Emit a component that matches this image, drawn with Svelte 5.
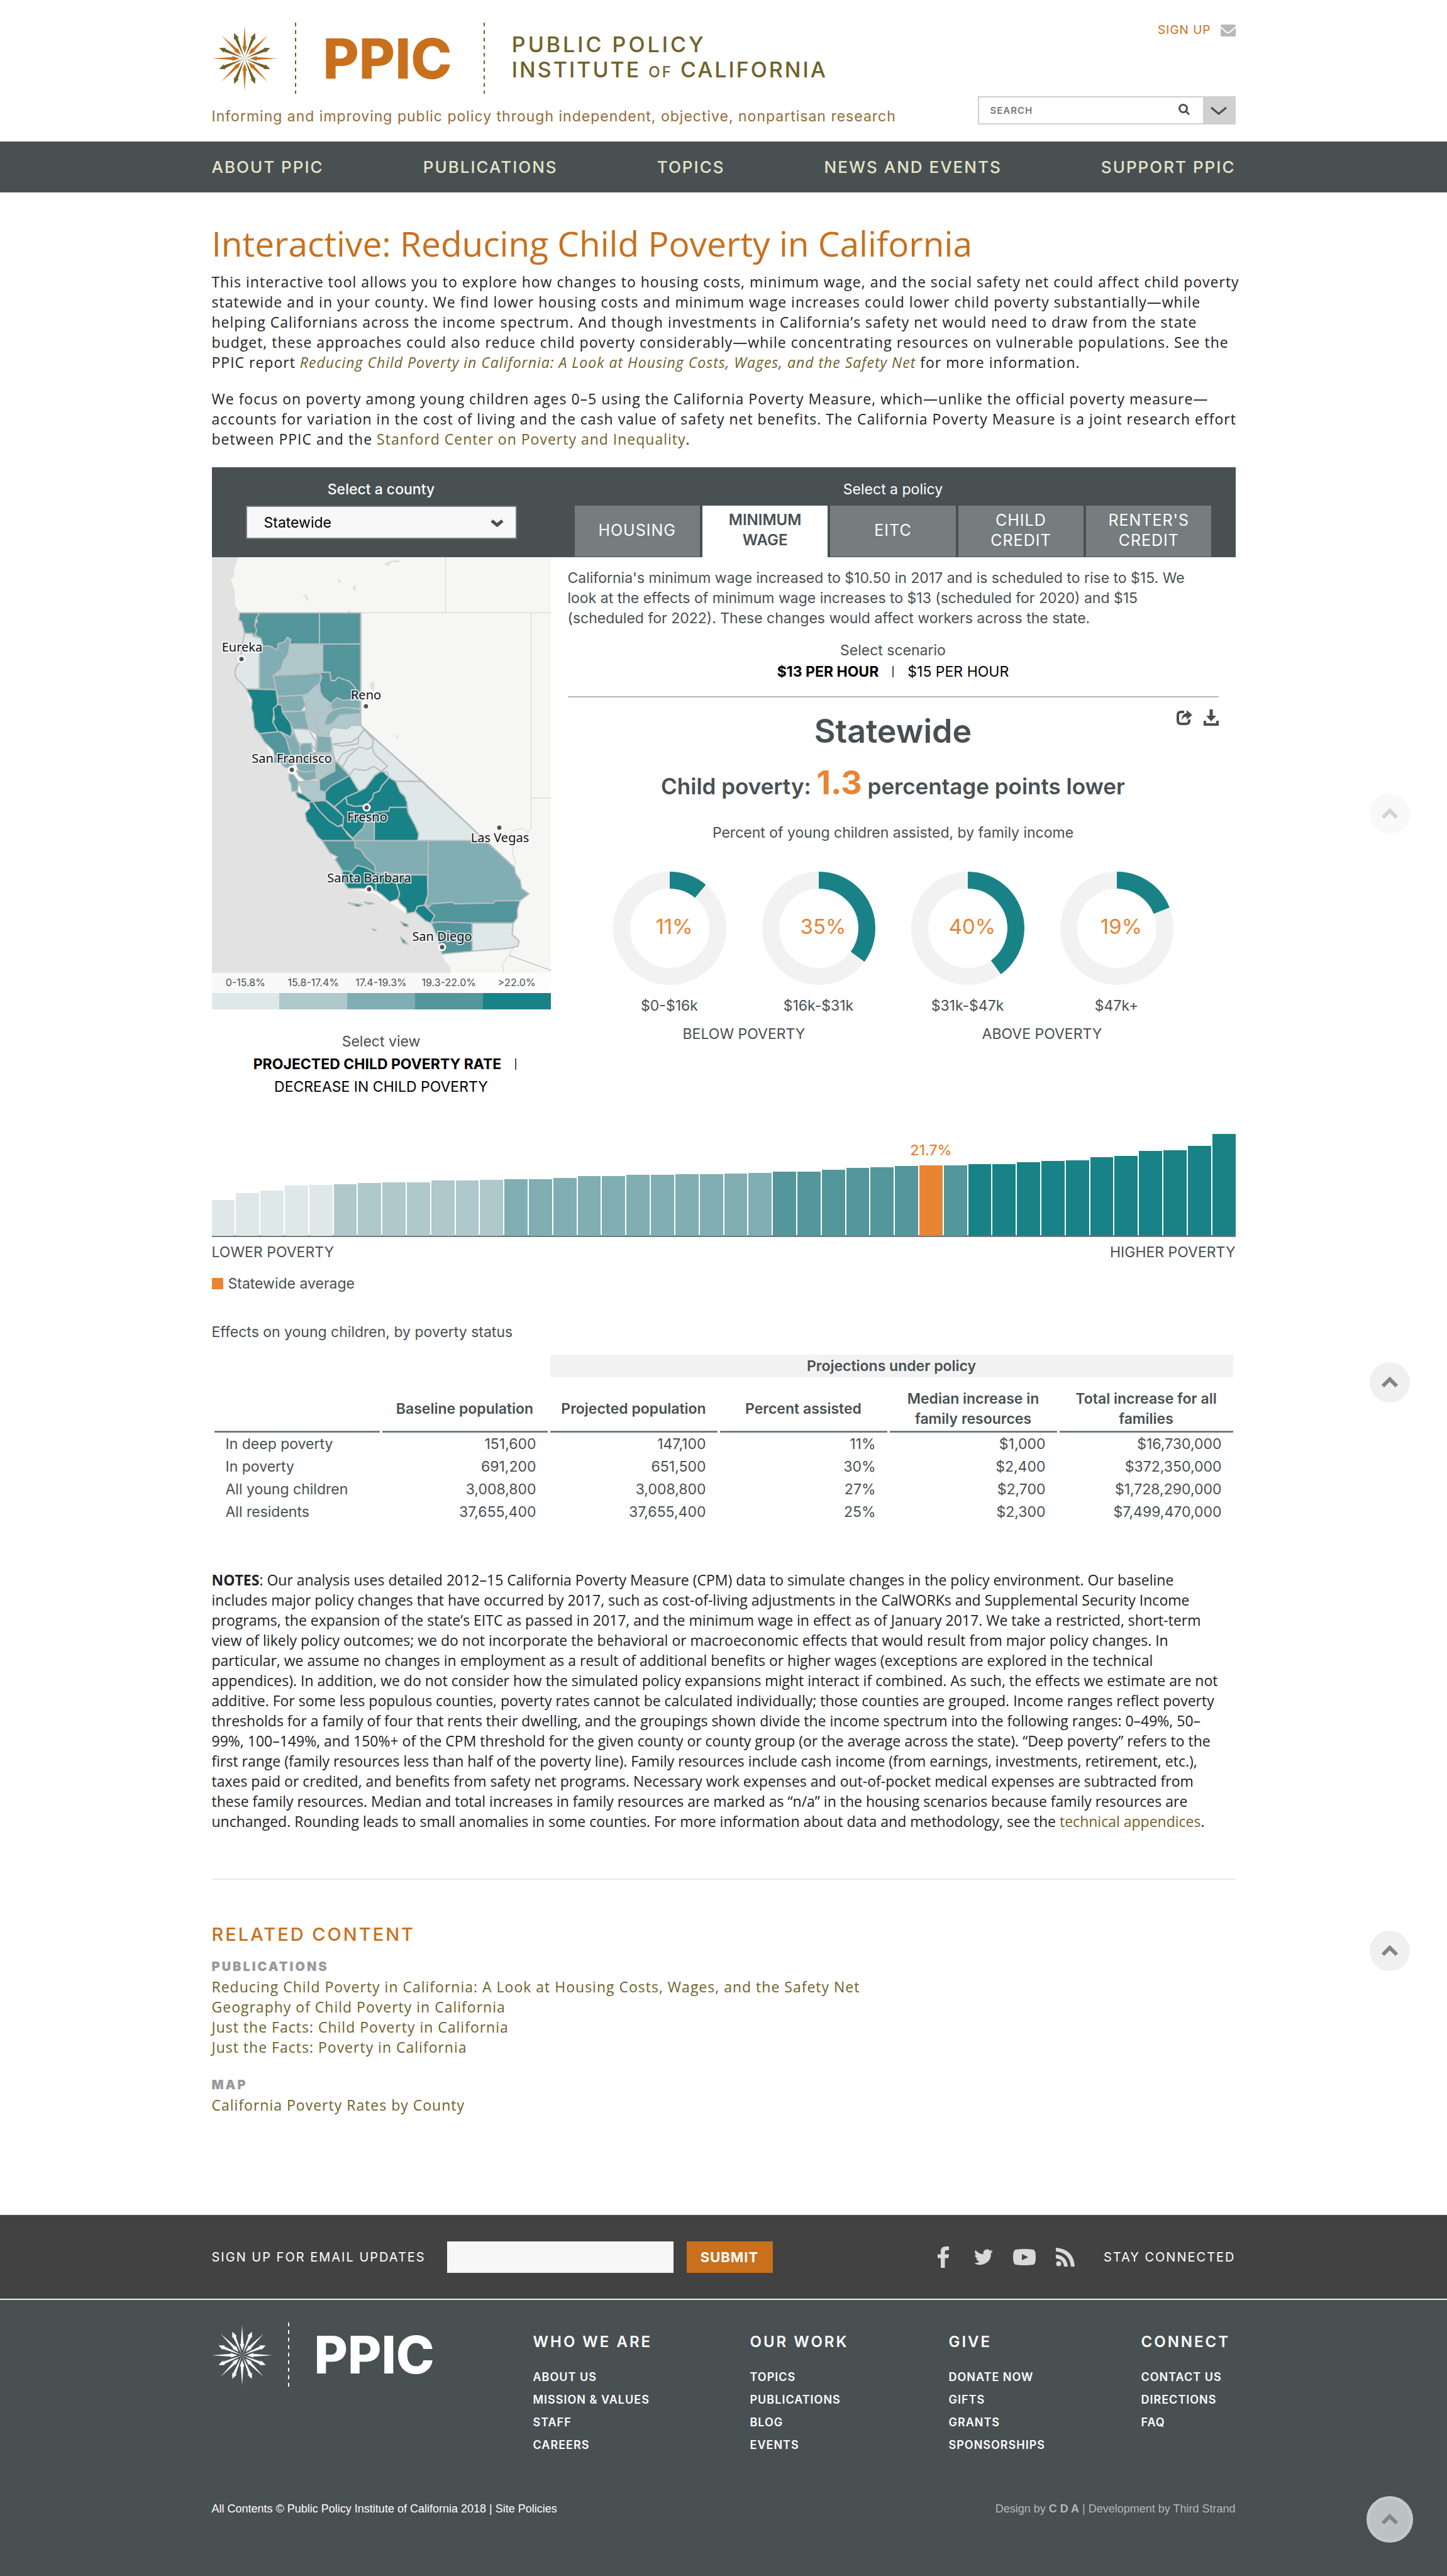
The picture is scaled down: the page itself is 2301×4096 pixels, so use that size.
<script>
  const nav = ['ABOUT PPIC', 'PUBLICATIONS', 'TOPICS', 'NEWS AND EVENTS', 'SUPPORT PPIC'];
  const tabs = ['HOUSING', 'MINIMUM WAGE', 'EITC', 'CHILD CREDIT', "RENTER'S CREDIT"];
  const scale = ['#dee8e9', '#aec8cc', '#80aeb2', '#53969b', '#198287'];
  const legend = ['0-15.8%', '15.8-17.4%', '17.4-19.3%', '19.3-22.0%', '>22.0%'];
  const rays = [0, 45, 90, 135, 180, 225, 270, 315];

  const counties = [
    [3, '155,371 242,371 225,385 220,400 228,412 222,425 212,427 212,421 176,420 163,392 150,388'],
    [3, '242,371 500,371 500,446 372,446 374,434 360,430 350,440 322,445 318,460 300,455 285,450 255,450 246,432 222,425 228,412 220,400 232,390 225,385'],
    [3, '500,371 679,371 679,445 500,446'],
    [0, '176,420 212,421 212,427 246,432 255,450 240,470 240,553 182,553 172,545 140,528 133,515 140,500 165,481 160,470 168,440'],
    [2, '255,450 285,450 300,455 318,460 322,445 350,440 360,430 374,434 365,470 345,485 335,505 300,522 312,555 240,553 240,470'],
    [1, '372,446 514,446 514,512 440,518 335,520 300,522 335,505 345,485 365,470'],
    [3, '514,446 679,445 679,580 655,578 655,550 630,535 580,525 570,533 550,533 545,513 514,512'],
    [2, '300,522 335,520 440,518 500,514 510,525 500,540 480,548 450,565 425,568 320,571 312,555'],
    [3, '500,514 545,513 550,533 570,533 580,525 630,535 655,550 655,578 600,580 575,574 550,588 515,572 503,560 500,540 510,525'],
    [4, '182,553 312,555 320,590 300,620 298,632 320,650 330,655 240,660 218,646 213,612 205,600 208,580'],
    [4, '320,590 335,592 340,608 355,620 375,635 382,655 375,668 340,658 320,655 298,632 305,625 300,600'],
    [2, '320,571 425,568 432,580 440,590 420,607 340,606 335,592 320,590'],
    [1, '425,568 450,565 480,548 500,540 503,560 515,572 550,588 535,605 520,614 445,612 440,600 440,580'],
    [2, '340,608 420,607 440,605 440,618 450,640 455,650 385,648 375,635 355,620'],
    [1, '445,612 480,613 475,630 490,645 495,665 470,655 450,640 440,618'],
    [1, '480,613 520,610 550,592 550,602 525,630 520,640 495,650 478,632'],
    [2, '550,588 575,574 600,580 677,578 677,600 610,597 555,603'],
    [2, '525,630 535,615 560,603 610,597 677,602 677,612 590,616 550,638 520,640'],
    [1, '495,650 520,640 550,638 590,615 677,612 679,640 620,648 560,645 545,652 540,665 495,663'],
    [0, '545,652 560,645 620,648 640,640 679,640 694,650 670,668 640,680 580,683 553,685 540,665'],
    [0, '553,685 640,680 670,668 694,650 735,675 728,692 745,705 775,722 795,738 768,750 740,760 700,790 672,798 650,785 630,760 600,740 567,724'],
    [0, '694,650 948,774 830,774 802,765 795,752 768,750 795,738 770,725 740,710 728,692 735,675'],
    [0, '830,774 948,774 1220,916 925,916 930,900 915,880 885,850 880,825 870,810 850,800'],
    [3, '240,660 330,655 355,670 365,690 378,712 340,725 305,712 300,700 262,680'],
    [2, '330,655 375,668 382,655 400,672 415,690 418,710 378,712 365,690 355,670'],
    [0, '385,648 455,650 470,665 487,680 480,698 470,690 460,683 415,685 400,672'],
    [2, '415,690 430,683 465,683 470,705 430,715 418,710'],
    [2, '487,665 548,668 553,685 553,705 520,706 485,704 490,680'],
    [2, '305,712 340,725 378,712 392,730 372,745 345,738 330,728 300,730'],
    [2, '392,722 430,715 485,704 485,748 440,752 410,748'],
    [2, '400,748 440,752 485,748 485,768 440,773 410,760'],
    [1, '485,704 520,706 553,705 567,724 567,750 540,757 500,770 485,768'],
    [1, '410,775 500,773 500,795 525,800 525,818 470,822 430,805'],
    [2, '368,757 385,757 410,775 405,798 380,798 378,780 368,770'],
    [3, '567,724 630,760 600,770 550,785 525,800 500,795 500,770 540,757 567,750'],
    [4, '525,800 550,785 600,770 630,760 672,798 615,812 565,835 525,818'],
    [4, '615,812 672,798 700,790 740,760 768,750 780,752 802,765 770,785 760,797 735,803 730,815 700,832 650,834 620,828'],
    [4, '395,798 430,805 470,822 455,825 430,818 405,812'],
    [4, '470,822 525,820 565,838 605,858 605,875 580,882 540,868 500,845'],
    [4, '455,825 470,822 500,845 540,868 580,882 600,880 620,900 650,916 512,916 490,905 470,885 445,870 438,850 458,838'],
    [4, '565,835 615,812 620,828 650,834 700,832 730,815 735,803 760,797 770,785 802,765 830,774 850,800 870,810 880,825 880,836 805,836 800,845 740,848 738,868 690,885 645,910 600,885 605,858'],
    [2, '645,910 690,885 700,868 738,868 738,916 650,916'],
    [4, '738,848 800,845 805,836 880,836 885,850 915,880 930,900 925,916 738,916'],
    [3, '512,916 653,916 655,932 680,938 700,955 740,975 745,993 700,980 665,975 640,990 600,988 568,960 578,955 545,945'],
    [2, '653,916 972,916 972,998 745,993 740,975 700,955 680,938 655,932'],
    [2, '972,916 1220,916 1345,980 1350,995 1370,1010 1376,1030 1408,1043 1370,1059 1262,1060 1255,1065 1085,1067 1080,1063 985,1067 975,1075 960,1068 970,1045'],
    [4, '600,988 640,990 665,975 700,980 745,993 745,1035 690,1030 625,1030 598,1010'],
    [4, '745,993 830,998 835,1020 848,1043 840,1055 805,1062 770,1045 745,1035'],
    [4, '830,998 968,998 970,1045 955,1070 925,1073 915,1086 880,1090 875,1078 850,1066 840,1055 848,1043 835,1020'],
    [4, '915,1086 925,1073 955,1070 1000,1095 985,1113 960,1108'],
    [3, '955,1070 975,1075 985,1067 1080,1063 1085,1067 1255,1065 1262,1060 1370,1059 1358,1080 1358,1100 1340,1113 1020,1113 985,1110 1000,1095'],
    [3, '985,1113 1020,1110 1162,1113 1162,1180 1032,1187 1020,1165 1010,1145'],
    [0, '1162,1113 1340,1113 1335,1140 1365,1155 1360,1168 1325,1173 1162,1180'],
    [4, '622,1064 640,1066 684,1069 668,1074 650,1070'],
    [4, '694,1063 738,1066 712,1068'],
    [4, '853,1110 885,1117 884,1121 866,1120'],
    [4, '850,1146 864,1152 882,1163 862,1160'],
    [4, '730,1127 748,1129 735,1131'],
  ];
  const cities = [
    ['Eureka', 165, 464, 163, 481], ['Reno', 703, 578, 703, 594], ['San Francisco', 380, 730, 380, 747],
    ['Fresno', 707, 870, 705, 836], ['Las Vegas', 1282, 920, 1281, 885], ['Santa Barbara', 716, 1015, 715, 1032],
    ['San Diego', 1031, 1155, 1031, 1171],
  ].map(([name, x, y, dx, dy]) => ({
    name,
    x: Math.round((x - 34) * 0.36686), y: Math.round((y - 238) * 0.66494),
    dx: Math.round((dx - 34) * 0.36686), dy: Math.round((dy - 238) * 0.66494),
  }));

  const donuts = [[11, '$0-$16k'], [35, '$16k-$31k'], [40, '$31k-$47k'], [19, '$47k+']];
  const ring = 2 * Math.PI * 76.5;

  const heights = [57, 68, 72, 80, 81, 82, 84, 85, 85, 88, 88, 89, 90, 90, 92, 95, 95, 97, 97, 98, 98, 99, 100, 102, 102, 105, 108, 109, 111, 112, 112, 114, 114, 117, 119, 120, 125, 127, 135, 136, 143, 162];
  const AVG = 29;
  const tone = (i) => (i === AVG ? '#e88434' : scale[i < 5 ? 0 : i < 12 ? 1 : i < 23 ? 2 : i < 31 ? 3 : 4]);

  const rows = [
    ['In deep poverty', '151,600', '147,100', '11%', '$1,000', '$16,730,000'],
    ['In poverty', '691,200', '651,500', '30%', '$2,400', '$372,350,000'],
    ['All young children', '3,008,800', '3,008,800', '27%', '$2,700', '$1,728,290,000'],
    ['All residents', '37,655,400', '37,655,400', '25%', '$2,300', '$7,499,470,000'],
  ];
  const footerCols = [
    ['WHO WE ARE', ['ABOUT US', 'MISSION & VALUES', 'STAFF', 'CAREERS']],
    ['OUR WORK', ['TOPICS', 'PUBLICATIONS', 'BLOG', 'EVENTS']],
    ['GIVE', ['DONATE NOW', 'GIFTS', 'GRANTS', 'SPONSORSHIPS']],
    ['CONNECT', ['CONTACT US', 'DIRECTIONS', 'FAQ']],
  ];
</script>

{#snippet burst()}
  <svg class="burst" viewBox="-58 -58 116 116" aria-hidden="true">
    {#each rays as r}
      <path class="ray-out" transform="rotate({r + 22.5})" d="M0 0 L.6 -10 L2.8 -39 L5 -37.5 L0 -49 L-5 -37.5 L-2.8 -39 L-.6 -10Z" />
      <path class="ray-in" transform="rotate({r})" d="M0 -58 L2.6 -21 L4.4 -22 L0 -9 L-4.4 -22 L-2.6 -21Z" />
    {/each}
  </svg>
{/snippet}

{#snippet topLink(kind)}
  <a class="to-top {kind}" href="#top" aria-label="Back to top">
    <svg viewBox="0 0 28 18" aria-hidden="true"><path d="M3 15 L14 4 L25 15" /></svg>
  </a>
{/snippet}

<div class="page" id="top">
  <header class="wrap masthead">
    <div class="brand">
      <a class="logo" href="#home" aria-label="PPIC home">
        {@render burst()}
        <span class="dash"></span>
        <span class="ppic">PPIC</span>
        <span class="dash"></span>
        <span class="name"><span class="name-a">PUBLIC POLICY</span><span class="name-b">INSTITUTE <small>OF</small> CALIFORNIA</span></span>
      </a>
      <p class="tagline">Informing and improving public policy through independent, objective, nonpartisan research</p>
    </div>
    <div class="tools">
      <a class="signup-link" href="#signup">SIGN UP
        <svg width="24" height="19" viewBox="0 0 24 19" aria-hidden="true"><rect width="24" height="19" rx="2" fill="#b8b8b8" /><path d="M0 4 L9 12 Q12 14 15 12 L24 4" fill="none" stroke="#fff" stroke-width="2" /></svg>
      </a>
      <form class="search" role="search">
        <input type="text" placeholder="SEARCH" aria-label="Search" />
        <button class="find" type="button" aria-label="Search"><svg width="18" height="18" viewBox="0 0 18 18" aria-hidden="true"><circle cx="7.5" cy="7.5" r="6" /><path d="M12 12 L17 17" /></svg></button>
        <button class="more" type="button" aria-label="More search options"><svg width="28" height="14" viewBox="0 0 28 14" aria-hidden="true"><path d="M2 2 L14 12 L26 2" /></svg></button>
      </form>
    </div>
  </header>

  <nav class="nav"><div class="wrap nav-row">{#each nav as n}<a href="#nav">{n}</a>{/each}</div></nav>

  <main class="wrap">
    <h1>Interactive: Reducing Child Poverty in California</h1>
    <p class="body first">This interactive tool allows you to explore how changes to housing costs, minimum wage, and the social safety net could affect child poverty<br />statewide and in your county. We find lower housing costs and minimum wage increases could lower child poverty substantially—while<br />helping Californians across the income spectrum. And though investments in California’s safety net would need to draw from the state<br />budget, these approaches could also reduce child poverty considerably—while concentrating resources on vulnerable populations. See the<br />PPIC report <a href="#report"><em>Reducing Child Poverty in California: A Look at Housing Costs, Wages, and the Safety Net</em></a> for more information.</p>
    <p class="body second">We focus on poverty among young children ages 0–5 using the California Poverty Measure, which—unlike the official poverty measure—<br />accounts for variation in the cost of living and the cash value of safety net benefits. The California Poverty Measure is a joint research effort<br />between PPIC and the <a href="#stanford">Stanford Center on Poverty and Inequality</a>.</p>

    <section class="widget">
      <div class="bar">
        <div class="pick">
          <label for="county">Select a county</label>
          <div class="select-box">
            <select id="county"><option>Statewide</option></select>
            <svg width="23" height="16" viewBox="0 0 23 16" aria-hidden="true"><path d="M3 4 L11.5 11 L20 4" /></svg>
          </div>
        </div>
        <div class="policy">
          <p>Select a policy</p>
          <div class="tabs">{#each tabs as t, i}<button type="button" class:active={i === 1}>{t}</button>{/each}</div>
        </div>
      </div>

      <div class="panes">
        <div class="left">
          <div class="map">
            <svg viewBox="0 0 539 693" role="img" aria-label="Map of child poverty rates by county">
              <rect width="539" height="693" fill="#e2e2e2" />
              <g transform="scale(.36686 .66494) translate(-34 -238)">
                <path class="land" d="M150 238 L132 262 L130 282 L116 293 L132 315 L133 350 L155 371 L163 392 L176 420 L168 440 L160 470 L140 500 L133 515 L182 553 L205 600 L218 646 L262 680 L305 725 L372 745 L380 798 L455 825 L438 850 L512 916 L598 985 L625 1030 L730 1040 L880 1090 L915 1086 L985 1115 L1032 1187 L1045 1205 L1065 1215 L1075 1245 L1110 1282 L1504 1282 L1504 238Z" />
                <path class="lake" d="M780 255 L800 248 L848 243 L845 250 L815 250 L798 259Z M580 290 L592 292 L590 301 L582 298Z M645 308 L660 305 L655 319 L645 318Z M425 329 L445 328 L453 338 L448 344 L438 334Z M715 540 L735 534 L741 545 L733 560 L722 552Z M832 664 L844 663 L841 673 L833 671Z M618 369 L630 364 L638 371Z" />
                <path class="line" d="M155 371 H1504 M1047 238 V371 M1417 371 V885 L1405 897 L1380 886 L1335 892 L1330 905 L1340 930 L1336 945 L1350 965 L1345 980 M1417 814 H1504" />
                <path class="line" d="M1365 1155 L1340 1172 L1322 1190 L1293 1210 L1302 1240" />
                <path class="line dark" d="M1322 1190 L1504 1226" />
                {#each counties as [c, pts]}<polygon class="county" points={pts} fill={scale[c]} />{/each}
                <path class="split" d="M553 685 L600 690 L668 684 L670 668 M600 740 L625 715 L672 692 L710 697 L728 692 M630 760 L650 744 L700 748 L735 738 L768 750 M579 727 L600 708 L655 695" />
                <path class="edge" d="M679 371 V640 L1345 980" />
              </g>
              {#each cities as c}
                <circle cx={c.dx} cy={c.dy} r="5" fill="#555" stroke="#fff" stroke-width="3" />
                <text x={c.x} y={c.y}>{c.name}</text>
              {/each}
            </svg>
            <div class="legend">{#each legend as l}<span>{l}</span>{/each}</div>
          </div>
          <div class="swatches">{#each scale as s}<i style="background:{s}"></i>{/each}</div>
          <div class="view">
            <p>Select view</p>
            <div class="view-row"><button type="button" class="on">PROJECTED CHILD POVERTY RATE</button><i class="sep"></i></div>
            <div class="view-row second"><button type="button">DECREASE IN CHILD POVERTY</button></div>
          </div>
        </div>

        <div class="right">
          <p class="desc">California's minimum wage increased to $10.50 in 2017 and is scheduled to rise to $15. We<br />look at the effects of minimum wage increases to $13 (scheduled for 2020) and $15<br />(scheduled for 2022). These changes would affect workers across the state.</p>
          <div class="scenario">
            <p>Select scenario</p>
            <div><button type="button" class="on">$13 PER HOUR</button><i class="sep"></i><button type="button">$15 PER HOUR</button></div>
          </div>
          <div class="result">
            <div class="actions">
              <button type="button" aria-label="Share"><svg width="25" height="24" viewBox="0 0 25 24"><path d="M12 3 H7 Q2 3 2 8 V17 Q2 22 7 22 H15 Q20 22 20 17 V15" fill="none" stroke="#485052" stroke-width="4" /><path d="M16 0 L25 8 L16 15 V11 Q11 10 8 16 Q8 6 16 5Z" fill="#485052" /></svg></button>
              <button type="button" aria-label="Download"><svg width="24" height="26" viewBox="0 0 24 26"><path d="M9.500 0 H14.500 V10 H20 L12 19 L4 10 H9.500Z M0 18 H4 V22 H20 V18 H24 V26 H0Z" fill="#485052" /></svg></button>
            </div>
            <h2>Statewide</h2>
            <p class="headline">Child poverty: <b>1.3</b> percentage points lower</p>
            <p class="sub">Percent of young children assisted, by family income</p>
            <div class="donuts">
              {#each donuts as [v, label]}
                <div class="donut">
                  <svg width="180" height="180" viewBox="0 0 180 180" role="img" aria-label="{v}%">
                    <circle cx="90" cy="90" r="76.5" fill="none" stroke="#f2f2f2" stroke-width="27" />
                    <circle cx="90" cy="90" r="76.5" fill="none" stroke="#198287" stroke-width="27" stroke-dasharray="{(ring * v) / 100} {ring}" transform="rotate(-90 90 90)" />
                    <text x="97" y="99">{v}%</text>
                  </svg>
                  <span>{label}</span>
                </div>
              {/each}
              <span class="group">BELOW POVERTY</span>
              <span class="group">ABOVE POVERTY</span>
            </div>
          </div>
        </div>
      </div>

      <div class="bars">
        {#each heights as h, i}
          <div style="height:{h}px;background:{tone(i)}">{#if i === AVG}<span>21.7%</span>{/if}</div>
        {/each}
      </div>
      <div class="ends"><span>LOWER POVERTY</span><span>HIGHER POVERTY</span></div>
      <p class="key"><i></i>Statewide average</p>

      <p class="table-title">Effects on young children, by poverty status</p>
      <table>
        <colgroup><col class="c1" /><col class="c1" /><col class="c2" /><col class="c2" /><col class="c2" /><col /></colgroup>
        <thead>
          <tr class="band"><td colspan="2"></td><th colspan="4" scope="colgroup">Projections under policy</th></tr>
          <tr class="heads"><td></td><th scope="col">Baseline population</th><th scope="col">Projected population</th><th scope="col">Percent assisted</th><th scope="col">Median increase in<br />family resources</th><th scope="col">Total increase for all<br />families</th></tr>
        </thead>
        <tbody>
          {#each rows as [name, ...vals]}<tr><th scope="row">{name}</th>{#each vals as v}<td>{v}</td>{/each}</tr>{/each}
        </tbody>
      </table>
    </section>

    <p class="notes"><strong>NOTES</strong>: Our analysis uses detailed 2012–15 California Poverty Measure (CPM) data to simulate changes in the policy environment. Our baseline<br />includes major policy changes that have occurred by 2017, such as cost-of-living adjustments in the CalWORKs and Supplemental Security Income<br />programs, the expansion of the state’s EITC as passed in 2017, and the minimum wage in effect as of January 2017. We take a restricted, short-term<br />view of likely policy outcomes; we do not incorporate the behavioral or macroeconomic effects that would result from major policy changes. In<br />particular, we assume no changes in employment as a result of additional benefits or higher wages (exceptions are explored in the technical<br />appendices). In addition, we do not consider how the simulated policy expansions might interact if combined. As such, the effects we estimate are not<br />additive. For some less populous counties, poverty rates cannot be calculated individually; those counties are grouped. Income ranges reflect poverty<br />thresholds for a family of four that rents their dwelling, and the groupings shown divide the income spectrum into the following ranges: 0–49%, 50–<br />99%, 100–149%, and 150%+ of the CPM threshold for the given county or county group (or the average across the state). “Deep poverty” refers to the<br />first range (family resources less than half of the poverty line). Family resources include cash income (from earnings, investments, retirement, etc.),<br />taxes paid or credited, and benefits from safety net programs. Necessary work expenses and out-of-pocket medical expenses are subtracted from<br />these family resources. Median and total increases in family resources are marked as “n/a” in the housing scenarios because family resources are<br />unchanged. Rounding leads to small anomalies in some counties. For more information about data and methodology, see the <a href="#tech">technical appendices</a>.</p>

    <hr />
    <section class="related">
      <h2>RELATED CONTENT</h2>
      <h3>PUBLICATIONS</h3>
      <ul>
        <li><a href="#p1">Reducing Child Poverty in California: A Look at Housing Costs, Wages, and the Safety Net</a></li>
        <li><a href="#p2">Geography of Child Poverty in California</a></li>
        <li><a href="#p3">Just the Facts: Child Poverty in California</a></li>
        <li><a href="#p4">Just the Facts: Poverty in California</a></li>
      </ul>
      <h3 class="next">MAP</h3>
      <ul><li><a href="#m1">California Poverty Rates by County</a></li></ul>
    </section>
  </main>

  <section class="connect">
    <div class="wrap connect-row">
      <form id="signup">
        <label for="email">SIGN UP FOR EMAIL UPDATES</label>
        <input id="email" type="email" />
        <button type="button">SUBMIT</button>
      </form>
      <div class="social">
        <a href="#fb" aria-label="Facebook"><svg width="26" height="34" viewBox="0 0 26 34"><path d="M5 34 V18.500 H0 V12.500 H5 V8 Q5 0 13 0 H18 V6 H14.500 Q11.500 6 11.500 9 V12.500 H18 L17 18.500 H11.500 V34Z" /></svg></a>
        <a href="#tw" aria-label="Twitter"><svg width="30" height="26" viewBox="0 0 24 20"><path d="M24 2.400c-.9.400-1.800.7-2.800.8 1-.6 1.800-1.600 2.200-2.700-1 .6-2 1-3.100 1.200A4.900 4.900 0 0 0 11.900 6.200 14 14 0 0 1 1.700 1C.4 3.200 1 6.100 3.200 7.600c-.8 0-1.600-.2-2.200-.6 0 2.300 1.600 4.400 3.900 4.900-.7.200-1.500.2-2.200.1.600 2 2.400 3.400 4.600 3.400A9.900 9.900 0 0 1 0 17.500 14 14 0 0 0 21.500 5c1-.7 1.800-1.600 2.500-2.600z" /></svg></a>
        <a href="#yt" aria-label="YouTube"><svg width="36" height="26" viewBox="0 0 36 26"><path fill-rule="evenodd" d="M4 1 Q18 -1 32 1 Q36 2 36 13 Q36 24 32 25 Q18 27 4 25 Q0 24 0 13 Q0 2 4 1Z M14 8 V18 L24 13Z" /></svg></a>
        <a href="#rss" aria-label="RSS"><svg width="30" height="30" viewBox="0 0 30 30"><circle cx="4.500" cy="25.500" r="4" /><path d="M0 0 Q28 2 30 30 H24 Q22 8 0 6Z M0 11 Q17 12 19 30 H13 Q12 18 0 17Z" /></svg></a>
        <span>STAY CONNECTED</span>
      </div>
    </div>
  </section>

  <footer class="footer">
    <div class="wrap">
      <div class="foot-grid">
        <a class="logo" href="#home" aria-label="PPIC home">{@render burst()}<span class="dash"></span><span class="ppic">PPIC</span></a>
        {#each footerCols as [title, links]}
          <div class="col"><h4>{title}</h4><ul>{#each links as l}<li><a href="#foot">{l}</a></li>{/each}</ul></div>
        {/each}
      </div>
      <div class="legal">
        <p>All Contents © Public Policy Institute of California 2018 | <a href="#policies">Site Policies</a></p>
        <p class="credit">Design by <b>C D A</b> | Development by Third Strand</p>
      </div>
    </div>
  </footer>

  {@render topLink('t1')}
  {@render topLink('t2')}
  {@render topLink('t3')}
  {@render topLink('t4')}
</div>

<style>
  :global(body) { margin: 0; background: #fff; }
  .page { position: relative; display: flex; flex-direction: column; min-height: 100vh; font-family: Inter, 'Liberation Sans', sans-serif; font-size: 23px; line-height: 32px; color: #485052; }
  .page :global(*) { box-sizing: border-box; }
  .wrap { width: 100%; max-width: 1628px; margin: 0 auto; }
  p, h1, h2, h3, h4, ul { margin: 0; padding: 0; font-weight: 400; }
  ul { list-style: none; }
  a { text-decoration: none; color: #6f6229; }
  button, input, select { font: inherit; color: inherit; border: 0; padding: 0; margin: 0; background: none; border-radius: 0; }
  button { cursor: pointer; }

  .masthead { display: flex; justify-content: space-between; padding: 36px 0 24px; }
  .logo { display: flex; align-items: center; height: 113px; color: #6f6229; }
  .burst { width: 104px; height: 104px; }
  .ray-out { fill: #6f6229; }
  .ray-in { fill: #c9701c; }
  .dash { width: 2px; height: 100%; margin: 0 43px 0 28px; background: repeating-linear-gradient(#6f6229 0 6px, transparent 6px 12px); }
  .ppic { font-size: 88px; font-weight: 800; line-height: 96px; color: #c9701c; }
  .ppic + .dash { margin: 0 43px 0 50px; }
  .name { display: flex; flex-direction: column; font-size: 34px; line-height: 40px; font-weight: 500; white-space: nowrap; }
  .name-a { letter-spacing: 4px; }
  .name-b { letter-spacing: 3px; }
  .name small { font-size: 24px; }
  .tagline { margin-top: 20px; color: #936c3a; letter-spacing: 1px; white-space: nowrap; }
  .tools { display: flex; flex-direction: column; align-items: flex-end; justify-content: space-between; padding-bottom: 3px; }
  .signup-link { display: flex; align-items: center; gap: 15px; font-size: 19px; line-height: 24px; letter-spacing: 1px; color: #c9701c; }
  .search { display: flex; width: 410px; height: 45px; border: 2px solid #d0d0d0; }
  .search input { flex: 1; min-width: 0; padding-left: 18px; font-size: 15px; font-weight: 600; letter-spacing: 1px; }
  .search input::placeholder { color: #75797a; opacity: 1; }
  .find { width: 36px; margin-right: 12px; display: flex; align-items: center; justify-content: center; }
  .find svg, .more svg { fill: none; stroke: #485052; stroke-width: 3; }
  .find svg { margin-bottom: 4px; }
  .more { width: 50px; display: flex; align-items: center; justify-content: center; background: #d0d0d0; }

  .nav { background: #485052; }
  .nav-row { display: flex; justify-content: space-between; align-items: center; height: 81px; }
  .nav a { color: #e6e4c8; font-size: 26px; font-weight: 500; letter-spacing: 2px; }

  main { padding-top: 49px; }
  h1 { font-family: 'Open Sans', sans-serif; font-size: 55px; line-height: 64px; color: #c9701c; white-space: nowrap; }
  .body { font-family: 'Open Sans', sans-serif; letter-spacing: 1px; color: #222; white-space: nowrap; }
  .body.first { margin-top: 13px; }
  .body.second { margin-top: 26px; }

  .widget { margin-top: 29px; }
  .bar, .panes { display: grid; grid-template-columns: 539px 1fr; }
  .bar { background: #485052; height: 143px; padding-top: 19px; color: #fff; font-weight: 500; }
  .pick, .policy { display: flex; flex-direction: column; align-items: center; }
  .select-box { position: relative; width: 431px; height: 53px; margin-top: 10px; font-weight: 400; }
  .select-box select { appearance: none; width: 100%; height: 100%; padding: 0 27px; border: 2px solid #757d7e; background: #f8f8f8; color: #000; }
  .select-box svg { position: absolute; right: 20px; top: 20px; fill: none; stroke: #485052; stroke-width: 5; pointer-events: none; }
  .policy { padding: 0 38px; align-items: stretch; text-align: center; }
  .tabs { display: grid; grid-template-columns: repeat(5, 1fr); gap: 4px; margin-top: 10px; height: 82px; }
  .tabs button { height: 81px; padding: 0 20px 4px; background: #757d7e; color: #fff; font-size: 25px; line-height: 32px; font-weight: 400; letter-spacing: 1px; }
  .tabs .active { height: 82px; background: #fff; color: #485052; font-size: 24px; font-weight: 600; letter-spacing: 0; }

  .map { position: relative; height: 693px; overflow: hidden; }
  .map svg { display: block; width: 539px; height: 693px; }
  .land { fill: #f6f6f4; }
  .lake { fill: #e2e2e2; }
  .line, .split, .edge, .county { vector-effect: non-scaling-stroke; }
  .line { fill: none; stroke: #cfcfcf; stroke-width: 1; }
  .line.dark { stroke: #aaa; }
  .county { stroke: #b9bdbf; stroke-width: 2; }
  .split, .edge { fill: none; stroke: #b9bdbf; stroke-width: 2; }
  .map text { font-family: 'Noto Sans', sans-serif; font-size: 20px; text-anchor: middle; fill: #111; stroke: #fff; stroke-width: 4; stroke-opacity: .7; paint-order: stroke; }
  .legend { position: absolute; inset: auto 0 0; display: grid; grid-template-columns: repeat(5, 1fr); height: 32px; background: rgba(255, 255, 255, .8); font-size: 16px; line-height: 30px; text-align: center; }
  .swatches { display: grid; grid-template-columns: repeat(5, 1fr); height: 26px; }
  .view { margin-top: 33px; text-align: center; line-height: 36px; }
  .view-row { display: flex; justify-content: center; align-items: center; gap: 22px; padding-left: 12px; height: 36px; color: #000; }
  .view-row.second { padding: 0; }
  .sep { width: 2px; height: 18px; background: #485052; }
  .on { font-weight: 700; }

  .right { padding: 17px 27px 0; }
  .desc { white-space: nowrap; }
  .scenario { margin-top: 18px; text-align: center; line-height: 34px; }
  .scenario div { display: flex; justify-content: center; align-items: center; gap: 22px; height: 34px; color: #000; }
  .result { position: relative; margin-top: 22px; border-top: 2px solid #b5b9ba; text-align: center; padding-top: 22px; }
  .actions { position: absolute; right: 0; top: 19px; display: flex; gap: 18px; align-items: center; }
  .actions svg { display: block; }
  .result h2 { font-size: 52px; line-height: 64px; font-weight: 600; }
  .headline { margin-top: 18px; font-size: 35px; line-height: 64px; font-weight: 600; }
  .headline b { font-size: 52px; font-weight: 700; color: #e88434; }
  .sub { margin-top: 26px; }
  .donuts { display: grid; grid-template-columns: repeat(4, 237px); justify-content: center; margin-top: 46px; }
  .donut { display: flex; flex-direction: column; align-items: center; gap: 17px; }
  .donut text { font-size: 33px; text-anchor: middle; fill: #e88434; }
  .donut svg { display: block; }
  .group { grid-column: span 2; margin-top: 13px; }

  .bars { display: grid; grid-template-columns: repeat(42, 1fr); gap: 2px; align-items: end; height: 164px; margin-top: 57px; border-bottom: 3px solid #757d7e; }
  .bars div { position: relative; }
  .bars span { position: absolute; left: 50%; bottom: 100%; transform: translateX(-50%); color: #e88434; font-weight: 500; line-height: 48px; }
  .ends { display: flex; justify-content: space-between; margin-top: 8px; }
  .key { display: flex; align-items: center; gap: 8px; margin-top: 18px; }
  .key i { width: 18px; height: 18px; background: #e88434; }
  .table-title { margin-top: 45px; }

  table { width: 100%; margin-top: 20px; border-collapse: separate; border-spacing: 4px 0; table-layout: fixed; }
  .c1 { width: 263px; }
  .c2 { width: 266px; }
  td, th { padding: 0 18px; height: 36px; text-align: right; font-weight: 400; line-height: 32px; white-space: nowrap; }
  tbody th { text-align: left; }
  thead th { text-align: center; font-weight: 600; }
  .band th { background: #f2f2f2; }
  .heads th, .heads td { height: 88px; padding: 18px 0 3px; border-bottom: 3px solid #757d7e; }

  .notes { margin-top: 74px; font-family: 'Open Sans', sans-serif; color: #222; white-space: nowrap; }
  hr { width: 100%; height: 2px; margin: 75px 0 0; border: 0; background: #e8e8e8; }
  .related { padding: 67px 0 157px; }
  .related h2 { font-size: 29px; line-height: 40px; letter-spacing: 3px; color: #c9701c; font-weight: 500; }
  .related h3 { margin-top: 15px; font-size: 20px; font-weight: 900; letter-spacing: 3px; color: #999; }
  .related h3.next { margin-top: 28px; }
  .related ul { font-family: 'Open Sans', sans-serif; letter-spacing: 1px; }

  .connect { background: #424242; border-top: 2px solid #ededed; border-bottom: 2px solid #ededed; color: #fff; }
  .connect-row { display: flex; justify-content: space-between; align-items: center; height: 133px; }
  .connect form { display: flex; align-items: center; }
  .connect label { width: 374px; font-size: 20px; letter-spacing: 2px; white-space: nowrap; }
  .connect input { width: 360px; height: 50px; padding: 0 12px; background: #f7f7f7; color: #222; }
  .connect form button { width: 137px; height: 50px; margin-left: 21px; background: #c9701c; color: #fff; font-size: 22px; font-weight: 700; letter-spacing: 1px; }
  .social { display: flex; align-items: center; gap: 32px; }
  .social svg { display: block; fill: #dadada; }
  .social span { margin-left: 14px; font-size: 20px; letter-spacing: 2px; }

  .footer { flex: 1; background: #485052; color: #fff; padding: 36px 0 92px; }
  .foot-grid { display: grid; grid-template-columns: 511fr 345fr 316fr 306fr 150fr; }
  .footer .logo { height: 104px; }
  .footer .burst { width: 96px; height: 96px; }
  .footer .ray-in, .footer .ray-out { fill: #fff; }
  .footer .dash { margin: 0 40px 0 25px; background: repeating-linear-gradient(#fff 0 6px, transparent 6px 12px); }
  .footer .ppic { font-size: 82px; color: #fff; }
  .footer a { color: #fff; }
  .col { padding-top: 15px; white-space: nowrap; }
  .col h4 { font-size: 24px; letter-spacing: 3px; font-weight: 600; }
  .col ul { margin-top: 22px; font-size: 18px; line-height: 36px; letter-spacing: 1px; font-weight: 600; }
  .legal { display: flex; justify-content: space-between; margin-top: 71px; font-family: 'Liberation Sans', sans-serif; font-size: 18px; line-height: 24px; }
  .credit { color: #b4b8b8; }

  .to-top { position: absolute; right: 54px; display: flex; align-items: center; justify-content: center; width: 74px; height: 74px; border-radius: 50%; border: 5px solid #fff; background: #f0f0f0; }
  .to-top svg { width: 28px; height: 18px; fill: none; stroke: #858585; stroke-width: 6; }
  .t1 { top: 1257px; opacity: .35; }
  .t2 { top: 2161px; }
  .t3 { top: 3065px; }
  .t4 { top: 3969px; border-color: #c4c8c8; background: #bcc1c1; }
</style>
